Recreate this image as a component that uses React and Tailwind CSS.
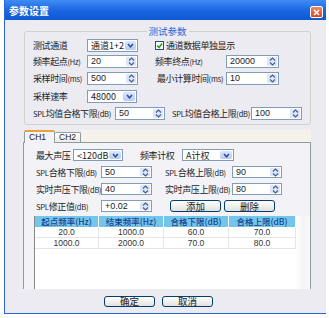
import React from "react";

const cjk = "font-['Noto_Sans_CJK_SC',sans-serif]";

function Arrows() {
  return (
    <svg width="7" height="9" viewBox="0 0 7 9">
      <path d="M1 3.5 L3.5 1 L6 3.5" fill="none" stroke="#4a5f86" strokeWidth="1.2" />
      <path d="M1 5.5 L3.5 8 L6 5.5" fill="none" stroke="#4a5f86" strokeWidth="1.2" />
    </svg>
  );
}

function Chevron() {
  return (
    <svg width="7" height="5" viewBox="0 0 7 5">
      <path d="M1 1 L3.5 3.8 L6 1" fill="none" stroke="#2f4f9c" strokeWidth="1.5" />
    </svg>
  );
}

function Spin({ value, className }) {
  return (
    <div className={`flex h-full items-stretch border border-[#7f9db9] bg-white ${className}`}>
      <span className="flex-1 pl-[3px] text-[9px] leading-[11px] text-[#222] font-['Liberation_Sans',sans-serif]">
        {value}
      </span>
      <span className="m-[1px] flex w-[10px] items-center justify-center rounded-[1px] bg-[#dce6fb]">
        <Arrows />
      </span>
    </div>
  );
}

function Select({ value, className }) {
  return (
    <div className={`flex h-full items-stretch border border-[#7f9db9] bg-white ${className}`}>
      <span className={`flex-1 pl-[3px] text-[9px] leading-[11px] text-[#222] whitespace-nowrap ${cjk}`}>
        {value}
      </span>
      <span className="m-[1px] flex w-[12px] items-center justify-center rounded-[2px] bg-gradient-to-b from-[#dbe6fd] to-[#b7cbf6]">
        <Chevron />
      </span>
    </div>
  );
}

function Btn({ label, className }) {
  return (
    <div
      className={`flex h-full items-center justify-center rounded-[3px] border border-[#003c74] bg-gradient-to-b from-white to-[#e3e2dc] text-[9.5px] text-[#222] ${cjk} ${className}`}
    >
      {label}
    </div>
  );
}

// latin bits (SPL, (dB)) are drawn smaller, like the half-width glyphs in the shot
function Label({ children, className = "" }) {
  const parts = children.split(/(\([^)]*\)|[A-Za-z]+)/).filter(Boolean);
  return (
    <span className={`shrink-0 whitespace-nowrap text-[9px] leading-[13px] tracking-[-0.4px] text-[#222] ${cjk} ${className}`}>
      {parts.map((p, i) =>
        /^[A-Za-z(]/.test(p) ? (
          <span key={i} className="text-[7.5px] tracking-[-0.2px]">
            {p}
          </span>
        ) : (
          <span key={i}>{p}</span>
        )
      )}
    </span>
  );
}

const rows = [
  ["20.0", "1000.0", "60.0", "70.0"],
  ["1000.0", "2000.0", "70.0", "80.0"],
];

export default function App() {
  return (
    <div className="h-[318px] w-[329px] overflow-hidden bg-white">
      <div className="ml-[4px] flex h-[314px] w-[322px] flex-col border-b border-l border-[#2a66d6]">
        {/* title bar */}
        <div className="flex h-[20px] shrink-0 items-center bg-gradient-to-b from-[#3f8cf3] via-[#1a68e3] to-[#0f58d2] pl-[4px]">
          <span className={`text-[10px] font-bold text-white ${cjk}`}>参数设置</span>
          <span className="ml-auto mr-[3px] mt-[4px] flex h-[12px] w-[13px] items-center justify-center rounded-[2px] border border-white bg-gradient-to-b from-[#f08a62] to-[#d5421d]">
            <svg width="7" height="7" viewBox="0 0 7 7">
              <path d="M1 1 L6 6 M6 1 L1 6" stroke="white" strokeWidth="1.6" />
            </svg>
          </span>
        </div>

        {/* body */}
        <div className="flex flex-1 flex-col bg-[#ecebf1]">
          {/* group box */}
          <div className="relative ml-[19px] mt-[11px] h-[94px] w-[287px] rounded-[3px] border border-[#d4d0c8] pl-[8px] pt-[7px]">
            <span className={`absolute -top-[7px] left-1/2 -translate-x-1/2 bg-[#ecebf1] px-[2px] text-[9.5px] leading-[13px] text-[#2a5fd8] ${cjk}`}>
              测试参数
            </span>

            <div className="flex h-[13px] items-center">
              <Label className="w-[54px]">测试通道</Label>
              <Select value="通道1+2" className="w-[51px]" />
              <span className="ml-[17px] flex h-[9px] w-[9px] items-center justify-center border border-[#1c5180] bg-white">
                <svg width="7" height="7" viewBox="0 0 7 7">
                  <path d="M1 3.5 L3 5.5 L6 1.5" fill="none" stroke="#21a121" strokeWidth="1.5" />
                </svg>
              </span>
              <Label className="ml-[2px]">通道数据单独显示</Label>
            </div>

            <div className="mt-[3px] flex h-[13px] items-center">
              <Label className="w-[54px]">频率起点(Hz)</Label>
              <Spin value="20" className="w-[51px]" />
              <Label className="ml-[17px] w-[71px]">频率终点(Hz)</Label>
              <Spin value="20000" className="w-[53px]" />
            </div>

            <div className="mt-[4px] flex h-[13px] items-center">
              <Label className="w-[54px]">采样时间(ms)</Label>
              <Spin value="500" className="w-[51px]" />
              <Label className="ml-[19px] w-[69px]">最小计算时间(ms)</Label>
              <Spin value="10" className="w-[53px]" />
            </div>

            <div className="mt-[5px] flex h-[13px] items-center">
              <Label className="w-[54px]">采样速率</Label>
              <Select value="48000" className="w-[50px]" />
            </div>

            <div className="mt-[4px] flex h-[13px] items-center">
              <Label className="w-[82px]">SPL均值合格下限(dB)</Label>
              <Spin value="50" className="w-[50px]" />
              <Label className="ml-[7px] w-[79px]">SPL均值合格上限(dB)</Label>
              <Spin value="100" className="w-[51px]" />
            </div>
          </div>

          {/* tabs */}
          <div className="ml-[18px] mt-[5px] flex h-[12px] w-[288px] items-end">
            <div className="relative z-10 -mb-[1px] ml-[1px] flex h-[13px] w-[31px] items-center rounded-t-[2px] border-x border-t-2 border-x-[#919b9c] border-t-[#e9a23b] bg-[#f3f2f6] pl-[4px] text-[8.5px] text-[#222] font-['Liberation_Sans',sans-serif]">
              CH1
            </div>
            <div className="flex h-[10px] w-[26px] items-center rounded-t-[2px] border-r border-t border-[#919b9c] bg-gradient-to-b from-white to-[#ecebe5] pl-[4px] text-[8.5px] text-[#222] font-['Liberation_Sans',sans-serif]">
              CH2
            </div>
            <div className="h-full flex-1 bg-[#f4f2ea]" />
          </div>

          {/* tab panel */}
          <div className="ml-[18px] flex h-[147px] w-[288px] flex-col border border-b-0 border-[#919b9c] bg-[#f3f2f6] pl-[12px]">
            <div className="mt-[6px] flex h-[12px] items-center">
              <Label className="w-[37px]">最大声压</Label>
              <Select value="<120dB" className="w-[50px]" />
              <Label className="ml-[17px] w-[42px]">频率计权</Label>
              <Select value="A计权" className="w-[52px]" />
            </div>

            <div className="mt-[5px] flex h-[12px] items-center">
              <Label className="w-[65px]">SPL合格下限(dB)</Label>
              <Spin value="50" className="w-[51px]" />
              <Label className="ml-[13px] w-[67px]">SPL合格上限(dB)</Label>
              <Spin value="90" className="w-[50px]" />
            </div>

            <div className="mt-[5px] flex h-[12px] items-center">
              <Label className="w-[65px]">实时声压下限(dB)</Label>
              <Spin value="40" className="w-[51px]" />
              <Label className="ml-[13px] w-[67px]">实时声压上限(dB)</Label>
              <Spin value="80" className="w-[50px]" />
            </div>

            <div className="mt-[5px] flex h-[12px] items-center">
              <Label className="w-[65px]">SPL修正值(dB)</Label>
              <Spin value="+0.02" className="w-[51px]" />
              <Btn label="添加" className="ml-[18px] w-[51px]" />
              <Btn label="删除" className="ml-[3px] w-[51px]" />
            </div>

            {/* table */}
            <div className="-ml-[2px] mt-[4px] flex h-[73px] w-[276px] border-l border-[#8a8a8a] bg-white">
              <div className="flex w-[261px] flex-col">
                <div className="flex h-[11px] bg-[#72c6ea]">
                  {["起点频率(Hz)", "结束频率(Hz)", "合格下限(dB)", "合格上限(dB)"].map((h, i) => (
                    <div
                      key={h}
                      className={`flex items-center justify-center border-r border-white text-[8.5px] font-medium text-[#1d3f8f] ${cjk} ${
                        i === 3 ? "w-[67px]" : i === 0 ? "w-[64px]" : "w-[65px]"
                      }`}
                    >
                      {h}
                    </div>
                  ))}
                </div>
                {rows.map((r, ri) => (
                  <div key={ri} className="flex h-[11px] border-b border-[#e6e6e6]">
                    {r.map((c, i) => (
                      <div
                        key={i}
                        className={`flex items-center justify-center border-r border-[#e6e6e6] text-[8.5px] text-[#333] font-['Liberation_Sans',sans-serif] ${
                          i === 3 ? "w-[67px]" : i === 0 ? "w-[64px]" : "w-[65px]"
                        }`}
                      >
                        {c}
                      </div>
                    ))}
                  </div>
                ))}
              </div>
              <div className="flex-1 bg-gradient-to-r from-white via-[#f4f4f4] to-[#fafafa]" />
            </div>
          </div>

          {/* buttons */}
          <div className="ml-[99px] mt-[7px] flex h-[11px]">
            <Btn label="确定" className="w-[51px]" />
            <Btn label="取消" className="ml-[7px] w-[51px]" />
          </div>
        </div>
      </div>
    </div>
  );
}
